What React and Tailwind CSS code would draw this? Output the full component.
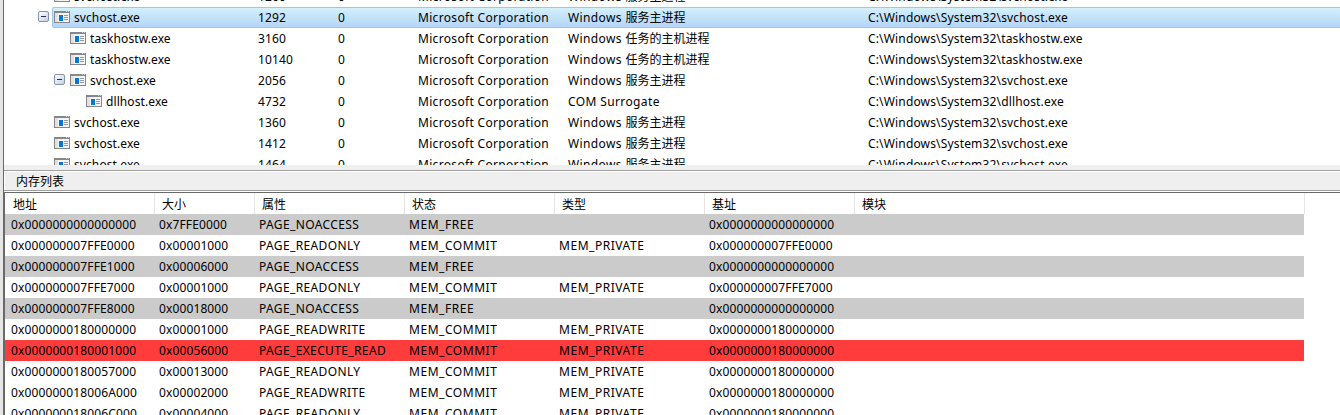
const P = [
  { n: 'svchost.exe', pid: '1260', d: ['Windows ', '服务主进程'], l: 0 },
  { n: 'svchost.exe', pid: '1292', d: ['Windows ', '服务主进程'], l: 0, open: true, sel: true },
  { n: 'taskhostw.exe', pid: '3160', d: ['Windows ', '任务的主机进程'], l: 1 },
  { n: 'taskhostw.exe', pid: '10140', d: ['Windows ', '任务的主机进程'], l: 1 },
  { n: 'svchost.exe', pid: '2056', d: ['Windows ', '服务主进程'], l: 1, open: true },
  { n: 'dllhost.exe', pid: '4732', d: ['COM Surrogate', ''], l: 2 },
  { n: 'svchost.exe', pid: '1360', d: ['Windows ', '服务主进程'], l: 0 },
  { n: 'svchost.exe', pid: '1412', d: ['Windows ', '服务主进程'], l: 0 },
  { n: 'svchost.exe', pid: '1464', d: ['Windows ', '服务主进程'], l: 0 },
];

const Z = '0x0000000000000000';
const B = '0x0000000180000000';
const M = [
  [Z, '0x7FFE0000', 'PAGE_NOACCESS', 'MEM_FREE', '', Z],
  ['0x000000007FFE0000', '0x00001000', 'PAGE_READONLY', 'MEM_COMMIT', 'MEM_PRIVATE', '0x000000007FFE0000'],
  ['0x000000007FFE1000', '0x00006000', 'PAGE_NOACCESS', 'MEM_FREE', '', Z],
  ['0x000000007FFE7000', '0x00001000', 'PAGE_READONLY', 'MEM_COMMIT', 'MEM_PRIVATE', '0x000000007FFE7000'],
  ['0x000000007FFE8000', '0x00018000', 'PAGE_NOACCESS', 'MEM_FREE', '', Z],
  [B, '0x00001000', 'PAGE_READWRITE', 'MEM_COMMIT', 'MEM_PRIVATE', B],
  ['0x0000000180001000', '0x00056000', 'PAGE_EXECUTE_READ', 'MEM_COMMIT', 'MEM_PRIVATE', B],
  ['0x0000000180057000', '0x00013000', 'PAGE_READONLY', 'MEM_COMMIT', 'MEM_PRIVATE', B],
  ['0x000000018006A000', '0x00002000', 'PAGE_READWRITE', 'MEM_COMMIT', 'MEM_PRIVATE', B],
  ['0x000000018006C000', '0x00004000', 'PAGE_READONLY', 'MEM_COMMIT', 'MEM_PRIVATE', B],
];

const indent = ['pl-[50px]', 'pl-[66px]', 'pl-[82px]'];
const indentOpen = ['pl-[34px]', 'pl-[50px]', 'pl-[66px]'];

function AppIcon() {
  return (
    <svg width="16" height="12" viewBox="0 0 16 12" shapeRendering="crispEdges" className="mt-[4px] shrink-0">
      <rect width="16" height="12" fill="#85878b" />
      <rect x="1" y="2" width="14" height="9" fill="#f4f4f4" />
      <rect x="1" y="2" width="3" height="9" fill="#e2e2e2" />
      <rect x="12" y="0" width="1" height="1" fill="#d0d1d3" />
      <rect x="14" y="0" width="1" height="1" fill="#d0d1d3" />
      <rect x="5" y="4" width="4" height="6" fill="#0078d7" />
      <path d="M10 4h4v1h-4zM10 6h4v1h-4zM10 8h4v1h-4z" fill="#96989b" />
    </svg>
  );
}

function Toggle() {
  return (
    <span className="mt-[4px] mr-[5px] flex h-[11px] w-[11px] shrink-0 items-center justify-center rounded-[2px] border border-[#8594ad] bg-linear-to-br from-white to-[#c5cfe2]">
      <span className="h-px w-[5px] bg-[#26344f]" />
    </span>
  );
}

function ProcessRow({ p }) {
  return (
    <div className="relative flex h-[21px] shrink-0 items-start">
      {p.sel && (
        <div className="absolute inset-y-0 right-[-3px] left-[48px] rounded-[2px] border border-[#a1c4f0] bg-linear-to-b from-[#d3f0fa] to-[#b5d5f9]" />
      )}
      <div className={'relative flex w-[254px] shrink-0 items-start ' + (p.open ? indentOpen[p.l] : indent[p.l])}>
        {p.open && <Toggle />}
        <AppIcon />
        <span className="ml-1 tracking-[0.09px]">{p.n}</span>
      </div>
      <span className="relative w-[80px] shrink-0 tracking-[0.13px]">{p.pid}</span>
      <span className="relative w-[80px] shrink-0">0</span>
      <span className="relative w-[150px] shrink-0 tracking-[0.32px]">Microsoft Corporation</span>
      <span className="relative w-[300px] shrink-0">
        <span className="tracking-[0.38px]">{p.d[0]}</span>
        {p.d[1]}
      </span>
      <span className="relative tracking-[0.16px]">{'C:\\Windows\\System32\\' + p.n}</span>
    </div>
  );
}

const colW = [
  'w-[148px] tracking-[0.12px]',
  'w-[100px] tracking-[0.12px]',
  'w-[150px] tracking-[0.37px]',
  'w-[150px] tracking-[0.54px]',
  'w-[150px] tracking-[0.54px]',
  'w-[150px] tracking-[0.12px]',
];
const headW = [
  'w-[150px] pl-[8px]',
  'w-[100px] pl-[7px]',
  'w-[150px] pl-[7px]',
  'w-[150px] pl-[7px]',
  'w-[150px] pl-[7px]',
  'w-[150px] pl-[7px]',
  'w-[450px] pl-[7px]',
];

export default function App() {
  return (
    <div className="flex h-[415px] w-[1340px] overflow-hidden bg-white font-['Noto_Sans','Noto_Sans_CJK_SC',sans-serif] text-[12px] leading-[21px] whitespace-pre text-black">
      <div className="w-[3px] shrink-0 bg-[#e5e5e5]" />
      <div className="w-px shrink-0 bg-[#696969]" />
      <div className="flex min-w-0 flex-1 flex-col">
        <div className="flex h-[165px] shrink-0 flex-col overflow-hidden">
          <div className="-mt-[14px] flex flex-col">
            {P.map((p, i) => (
              <ProcessRow key={i} p={p} />
            ))}
          </div>
        </div>
        <div className="h-[5px] shrink-0 bg-[#efefef]" />
        <div className="flex h-[21px] shrink-0 items-start border-y border-[#a0a0a0] bg-[#efefef] pl-[12px] leading-[22px] shadow-[inset_1px_1px_0_#fff]">
          内存列表
        </div>
        <div className="h-px shrink-0 bg-white" />
        <div className="h-px shrink-0 bg-[#696969]" />
        <div className="flex flex-1 flex-col overflow-hidden border-l border-[#696969]">
          <div className="flex h-[21px] shrink-0 leading-[23px]">
            {['地址', '大小', '属性', '状态', '类型', '基址', '模块'].map((h, i) => (
              <div key={h} className={'shrink-0 border-r border-[#e5e5e5] ' + headW[i]}>
                {h}
              </div>
            ))}
          </div>
          {M.map((r, i) => (
            <div
              key={i}
              className={
                'flex h-[21px] w-[1299px] shrink-0 pl-[6px] ' +
                (i === 6 ? 'bg-[#ff3c3c]' : r[3] === 'MEM_FREE' ? 'bg-[#cbcbcb]' : 'bg-white')
              }
            >
              {r.map((c, j) => (
                <span key={j} className={'shrink-0 ' + colW[j]}>
                  {c}
                </span>
              ))}
            </div>
          ))}
        </div>
      </div>
    </div>
  );
}
